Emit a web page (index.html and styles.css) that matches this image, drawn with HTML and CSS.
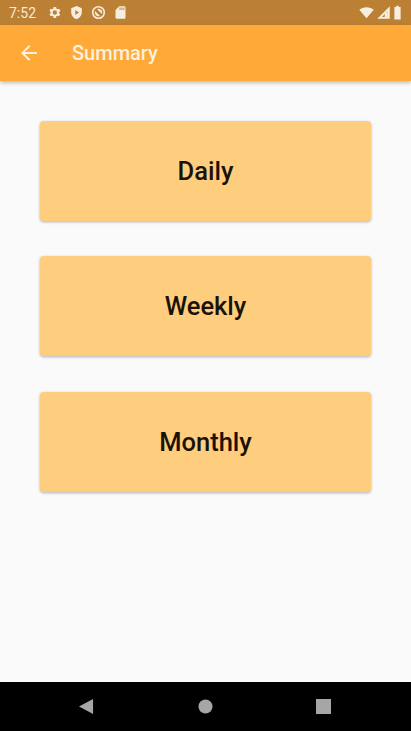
FILE: index.html
```html
<!DOCTYPE html>
<html>
<head>
<title>Summary</title>
<link rel="stylesheet" href="styles.css">
</head>
<body>

<div class="phone">
  <div class="status-bar">
    <span class="time">7:52</span>
    <!-- settings -->
    <svg class="status-icon" viewBox="0 0 24 24"><path fill-rule="evenodd" d="M19.4 13a7.500 7.500 0 0 0 0-2l2.100-1.600-2-3.500-2.500 1a7.500 7.500 0 0 0-1.700-1L14.500 3.200h-4L10.100 5.900a7.500 7.500 0 0 0-1.700 1l-2.500-1-2 3.500L6 11a7.500 7.500 0 0 0 0 2l-2.100 1.600 2 3.500 2.500-1a7.500 7.500 0 0 0 1.700 1l.4 2.700h4l.4-2.700a7.500 7.500 0 0 0 1.700-1l2.500 1 2-3.500zM12.500 15.500a3.500 3.500 0 1 1 0-7 3.500 3.500 0 0 1 0 7z"/></svg>
    <!-- shield -->
    <svg class="status-icon" viewBox="0 0 24 24"><path fill-rule="evenodd" d="M12 1.500 3.500 5v6c0 5.300 3.600 10.200 8.500 11.500 4.900-1.300 8.500-6.200 8.500-11.500V5zM10 8l6 4-6 4z"/></svg>
    <!-- no sync -->
    <svg class="status-icon" viewBox="0 0 24 24"><path fill-rule="evenodd" d="M12 1.500a10.500 10.500 0 1 0 0 21 10.500 10.500 0 0 0 0-21zm0 2.500a8 8 0 1 1 0 16 8 8 0 0 1 0-16z"/><path d="M12 6a6 6 0 0 1 5.500 8.400L9.600 6.500A6 6 0 0 1 12 6zM6.500 9.600l7.900 7.900A6 6 0 0 1 6.500 9.600z"/></svg>
    <!-- sd card -->
    <svg class="status-icon" viewBox="0 0 24 24"><path d="M18 2h-8L4 8v12a2 2 0 0 0 2 2h12a2 2 0 0 0 2-2V4a2 2 0 0 0-2-2zm-6 6h-1.500V4H12zm3 0h-1.500V4H15zm3 0h-1.500V4H18z"/></svg>
    <span class="spacer"></span>
    <div class="status-right">
      <!-- wifi -->
      <svg class="status-icon" viewBox="0 0 24 24"><path d="M12 21 .5 7.500C3.500 5 7.500 3.500 12 3.500s8.500 1.500 11.500 4z"/></svg>
      <!-- signal -->
      <svg class="status-icon" viewBox="0 0 24 24"><path fill-rule="evenodd" d="M22 2 2 22h20zM19 9.500V19h-9.500z"/><path d="M14 14.500 19 9.500V19h-5z"/></svg>
      <!-- battery -->
      <svg class="status-icon battery" viewBox="0 0 14 24"><path d="M5 1h4v2h3v20H2V3h3z"/></svg>
    </div>
  </div>

  <div class="app-bar">
    <svg class="back-icon" viewBox="0 0 24 24"><path d="M20 11H7.800l5.600-5.600L12 4l-8 8 8 8 1.400-1.400L7.800 13H20z"/></svg>
    <span class="app-title">Summary</span>
  </div>

  <div class="content">
    <div class="summary-card">Daily</div>
    <div class="summary-card">Weekly</div>
    <div class="summary-card">Monthly</div>
  </div>

  <div class="nav-bar">
    <svg class="nav-icon" viewBox="0 0 16 16"><path d="M15 0v16L0 8z"/></svg>
    <svg class="nav-icon" viewBox="0 0 16 16"><circle cx="8" cy="8" r="7.500"/></svg>
    <svg class="nav-icon" viewBox="0 0 16 16"><rect width="16" height="16"/></svg>
  </div>
</div>

</body>
</html>
```

FILE: styles.css
```css
body {
  margin: 0;
  font-family: Roboto, sans-serif;
  background-color: #fafafa;
}

.phone {
  display: flex;
  flex-direction: column;
  height: 731px;
  overflow: hidden;
}

.status-bar {
  display: flex;
  align-items: center;
  flex-shrink: 0;
  gap: 7px;
  height: 25px;
  padding: 0 9px;
  background-color: #bb8034;
  color: #f5ead9;
  box-sizing: border-box;
}

.time {
  font-size: 14px;
  margin-right: 4px;
}

.status-icon {
  width: 15px;
  height: 15px;
  fill: #f7eee0;
}

.status-right {
  display: flex;
  align-items: center;
  gap: 2px;
}

.battery {
  width: 9px;
}

.spacer {
  flex: 1;
}

.app-bar {
  display: flex;
  align-items: center;
  flex-shrink: 0;
  height: 56px;
  padding-left: 17px;
  background-color: #ffa938;
  box-shadow: 0 2px 4px rgba(0, 0, 0, 0.25);
}

.back-icon {
  width: 24px;
  height: 24px;
  fill: #fdf0dc;
}

.app-title {
  margin-left: 31px;
  font-size: 20px;
  font-weight: 500;
  color: #fdf0dc;
}

.content {
  flex: 1;
  display: flex;
  flex-direction: column;
  gap: 35.4px;
  padding: 40px 40px 0;
}

.summary-card {
  display: flex;
  align-items: center;
  justify-content: center;
  height: 100px;
  background-color: #ffcd7e;
  border-radius: 4px;
  box-shadow: 0 1px 3px rgba(0, 0, 0, 0.3);
  font-size: 25.500px;
  font-weight: 500;
  color: #1a1208;
}

.nav-bar {
  display: flex;
  align-items: center;
  justify-content: space-between;
  flex-shrink: 0;
  height: 49px;
  padding: 0 80px 0 79px;
  background-color: #000;
}

.nav-icon {
  width: 15px;
  height: 15px;
  fill: #a6a6a6;
}
```
